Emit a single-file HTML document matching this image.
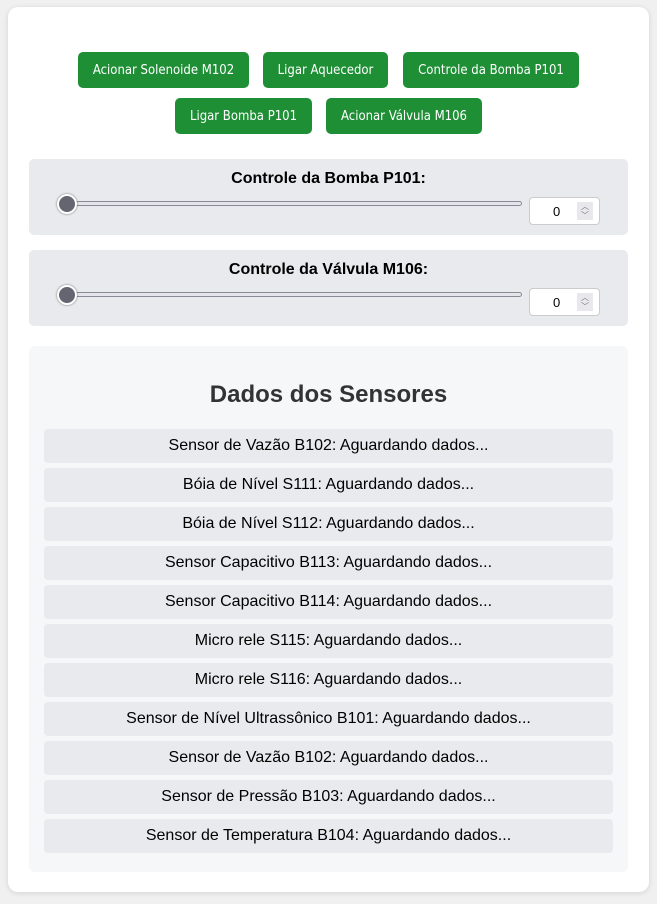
<!DOCTYPE html>
<html><head><meta charset="utf-8"><style>
*{box-sizing:border-box}
body{margin:0;background:#f0f0f0;font-family:"Liberation Sans",Arial,sans-serif;width:657px;height:904px;overflow:hidden}
.card{position:absolute;left:8px;top:7px;width:641px;height:885px;background:#fff;border-radius:10px;box-shadow:0 1px 6px rgba(0,0,0,.12)}
.btn{position:absolute;height:36px;background:#1e8f35;color:#fff;border-radius:5px;font-family:"DejaVu Sans Condensed","DejaVu Sans",sans-serif;font-size:13px;display:flex;align-items:center;justify-content:center}
.panel{position:absolute;left:29px;width:599px;height:76px;background:#e8eaed;border-radius:5px}
.panel h3{margin:0;position:absolute;top:11px;width:100%;text-align:center;font-size:16px;font-weight:bold;color:#000}
.track{position:absolute;left:31px;top:42px;width:462px;height:5px;border:1px solid #8a8a96;border-radius:3px;background:#e4e4ea}
.thumb{position:absolute;left:28px;top:35px;width:20px;height:20px;border-radius:50%;background:#656572;border:2px solid #fff;box-shadow:0 0 2px #666}
.num{position:absolute;left:500px;top:38px;width:71px;height:28px;background:#fff;border:1px solid #ccc;border-radius:4px;font-size:13px}
.num span{position:absolute;left:23px;top:6px}
.num i{position:absolute;right:6px;top:4px;width:16px;height:18px;background:#e8e8ec;font-style:normal;color:#777;font-size:8px;text-align:center;line-height:9px}
.sens{position:absolute;left:29px;top:346px;width:599px;height:526px;background:#f6f7f9;border-radius:6px}
.sens h2{margin:0;position:absolute;top:35px;width:100%;text-align:center;font-size:24px;color:#333}
.item{position:absolute;left:15px;width:569px;height:34px;background:#e8eaed;border-radius:4px;text-align:center;font-size:16px;line-height:34px;color:#000}
</style></head><body>
<div class="card"></div>
<div class="btn" style="left:78px;top:52px;width:171px">Acionar Solenoide M102</div>
<div class="btn" style="left:263px;top:52px;width:125px">Ligar Aquecedor</div>
<div class="btn" style="left:403px;top:52px;width:176px">Controle da Bomba P101</div>
<div class="btn" style="left:175px;top:98px;width:137px">Ligar Bomba P101</div>
<div class="btn" style="left:326px;top:98px;width:156px">Acionar Válvula M106</div>
<div class="panel" style="top:159px"><h3>Controle da Bomba P101:</h3><div class="track"></div><div class="thumb"></div><div class="num"><span>0</span><i>︿<br>﹀</i></div></div>
<div class="panel" style="top:250px"><h3>Controle da Válvula M106:</h3><div class="track"></div><div class="thumb"></div><div class="num"><span>0</span><i>︿<br>﹀</i></div></div>
<div class="sens"><h2>Dados dos Sensores</h2>
<div class="item" style="top:83px">Sensor de Vazão B102: Aguardando dados...</div>
<div class="item" style="top:122px">Bóia de Nível S111: Aguardando dados...</div>
<div class="item" style="top:161px">Bóia de Nível S112: Aguardando dados...</div>
<div class="item" style="top:200px">Sensor Capacitivo B113: Aguardando dados...</div>
<div class="item" style="top:239px">Sensor Capacitivo B114: Aguardando dados...</div>
<div class="item" style="top:278px">Micro rele S115: Aguardando dados...</div>
<div class="item" style="top:317px">Micro rele S116: Aguardando dados...</div>
<div class="item" style="top:356px">Sensor de Nível Ultrassônico B101: Aguardando dados...</div>
<div class="item" style="top:395px">Sensor de Vazão B102: Aguardando dados...</div>
<div class="item" style="top:434px">Sensor de Pressão B103: Aguardando dados...</div>
<div class="item" style="top:473px">Sensor de Temperatura B104: Aguardando dados...</div>
</div>
</body></html>
